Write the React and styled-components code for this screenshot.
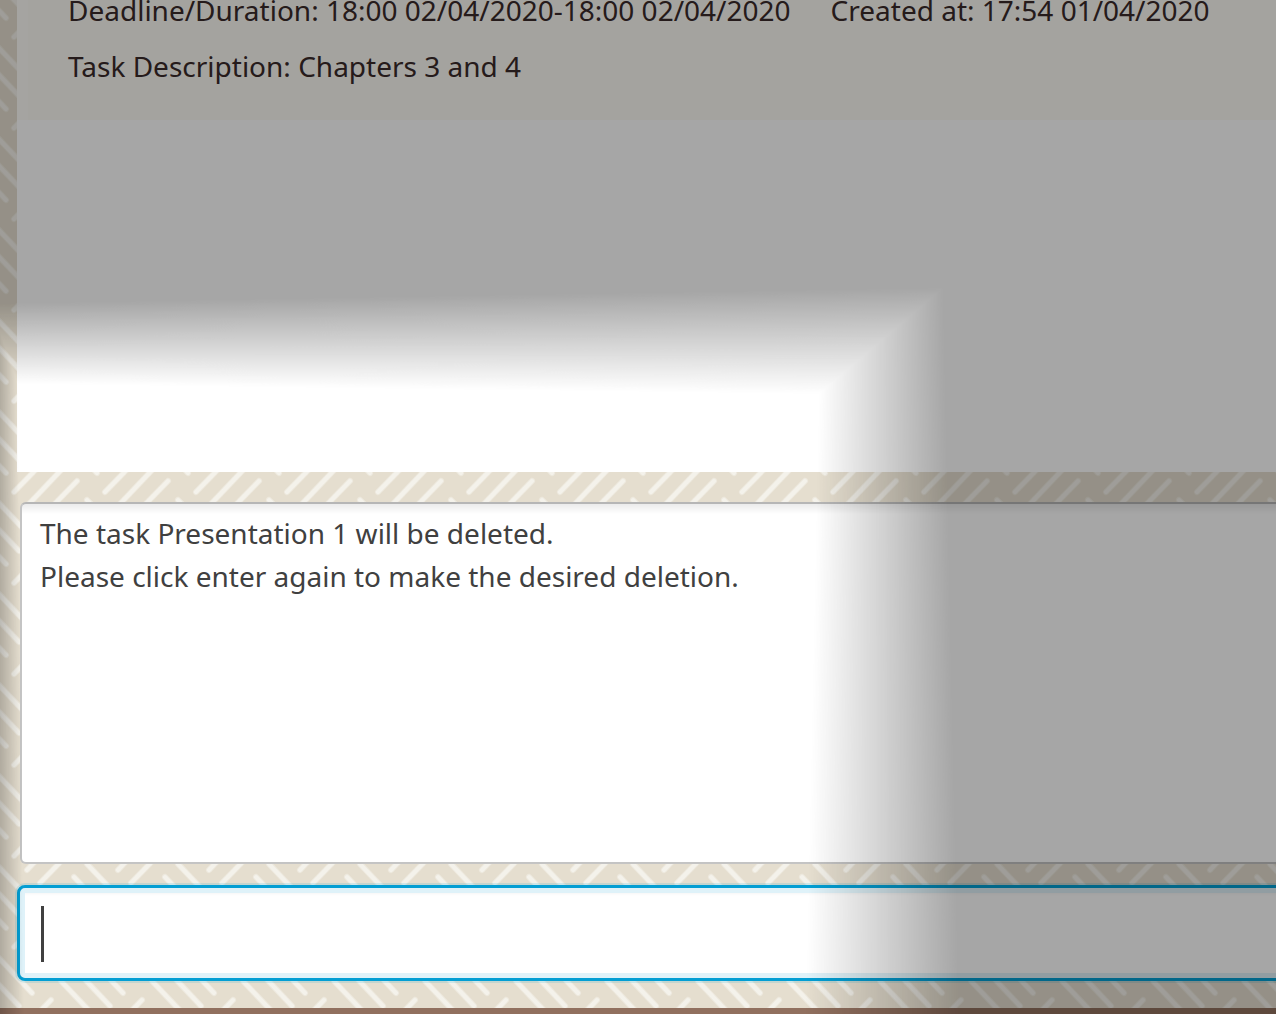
import React from "react";
import styled, { createGlobalStyle } from "styled-components";

const TILE = 91;
const STROKES =
  "M14 37L51 -1M27 51L64 12M40 64L77 26M87 45L123 83M74 58L110 96M61 71L97 109";

/* Herringbone tile: the strokes cross its edges, so they are repeated around it. */
const tileSvg = () => {
  const copies = [-1, 0, 1]
    .flatMap((x) =>
      [-1, 0, 1].map(
        (y) => `<path d='${STROKES}' transform='translate(${x * TILE} ${y * TILE})'/>`
      )
    )
    .join("");
  return `<svg xmlns='http://www.w3.org/2000/svg' width='${TILE}' height='${TILE}'><rect width='${TILE}' height='${TILE}' fill='#e5decf'/><g fill='none' stroke='#f5f3ed' stroke-linecap='round'><g stroke-width='6' stroke-opacity='.5'>${copies}</g><g stroke-width='4' stroke-opacity='.9'>${copies}</g></g></svg>`;
};

const PATTERN = `url("data:image/svg+xml,${encodeURIComponent(tileSvg())}")`;

const GlobalStyle = createGlobalStyle`
  * { box-sizing: border-box; }
  body {
    margin: 0;
    overflow: hidden;
    font-family: "Noto Sans", "Open Sans", sans-serif;
    font-size: 28px;
  }
`;

const Window = styled.main`
  position: relative;
  display: flex;
  flex-direction: column;
  min-height: 100vh;
  overflow: hidden;
  background: ${PATTERN};
`;

const TaskList = styled.section`
  flex: 1;
  margin-left: 17px;
  overflow: hidden;
  background: #fff;
`;

const TaskCard = styled.article`
  margin-top: -18px;
  padding: 0 0 26px 40px;
  border-left: 11px solid #fdfcf8;
  background: #fcfaf5;
  color: #3a2a2a;
`;

const TaskLine = styled.p`
  display: flex;
  gap: 40px;
  margin: 0;
  line-height: 56px;
  white-space: nowrap;
`;

const Console = styled.form`
  display: flex;
  flex-direction: column;
  gap: 21px;
  padding: 30px 0 27px 17px;
`;

const Result = styled.textarea`
  display: block;
  width: calc(100% + 12px);
  height: 362px;
  margin-left: 3px;
  padding: 8px 18px;
  border: 2px solid #c4c4c4;
  border-top-color: #b6b6b6;
  border-radius: 6px;
  background: linear-gradient(#ebebeb, #fff 10px);
  color: #404040;
  font: inherit;
  line-height: 43px;
  resize: none;
  outline: none;
`;

const CommandField = styled.label`
  position: relative;
  display: block;
`;

const CommandInput = styled.input`
  display: block;
  width: calc(100% + 12px);
  height: 96px;
  padding: 0 20px;
  border: 3px solid #039ed3;
  border-radius: 8px;
  background: #fff;
  box-shadow: 0 0 0 2px rgba(3, 158, 211, 0.15), inset 0 0 0 5px #dff2f9,
    inset 0 6px 3px #f6f6f6;
  font: inherit;
  outline: none;
`;

const Caret = styled.span`
  position: absolute;
  top: 21px;
  left: 24px;
  width: 3px;
  height: 56px;
  background: #404040;
`;

const Footer = styled.footer`
  height: 6px;
  background: #91705f;
`;

const Shade = styled.svg`
  position: absolute;
  inset: 0;
  width: 100%;
  height: 100%;
  pointer-events: none;
`;

/* Corners of the lit area, top left first and clockwise. */
const OUTER = [[-10, 303], [944, 287], [960, 1014], [-12, 1014]];
const INNER = [[18, 384], [819, 394], [806, 1014], [24, 1014]];
const STEPS = 90;

const rings = Array.from({ length: STEPS + 1 }, (_, i) => {
  const t = i / STEPS;
  const level = Math.round(255 * (1 - t));
  return {
    points: OUTER.map(([x, y], k) =>
      [x + (INNER[k][0] - x) * t, y + (INNER[k][1] - y) * t].join(",")
    ).join(" "),
    fill: `rgb(${level},${level},${level})`,
  };
});

function Spotlight() {
  return (
    <Shade aria-hidden="true">
      <mask id="lit" maskUnits="userSpaceOnUse" x="0" y="0" width="100%" height="100%">
        <rect width="100%" height="100%" fill="#fff" />
        {rings.map((ring) => (
          <polygon key={ring.fill} points={ring.points} fill={ring.fill} />
        ))}
      </mask>
      <rect width="100%" height="100%" fill="#000" fillOpacity="0.35" mask="url(#lit)" />
    </Shade>
  );
}

export default function App() {
  return (
    <Window>
      <GlobalStyle />
      <TaskList>
        <TaskCard>
          <TaskLine>
            <span>Deadline/Duration: 18:00 02/04/2020-18:00 02/04/2020</span>
            <span>Created at: 17:54 01/04/2020</span>
          </TaskLine>
          <TaskLine>Task Description: Chapters 3 and 4</TaskLine>
        </TaskCard>
      </TaskList>
      <Console onSubmit={(e) => e.preventDefault()}>
        <Result
          readOnly
          aria-label="Result"
          spellCheck={false}
          value={
            "The task Presentation 1 will be deleted.\nPlease click enter again to make the desired deletion."
          }
        />
        <CommandField>
          <CommandInput type="text" aria-label="Command" />
          <Caret />
        </CommandField>
      </Console>
      <Footer />
      <Spotlight />
    </Window>
  );
}
